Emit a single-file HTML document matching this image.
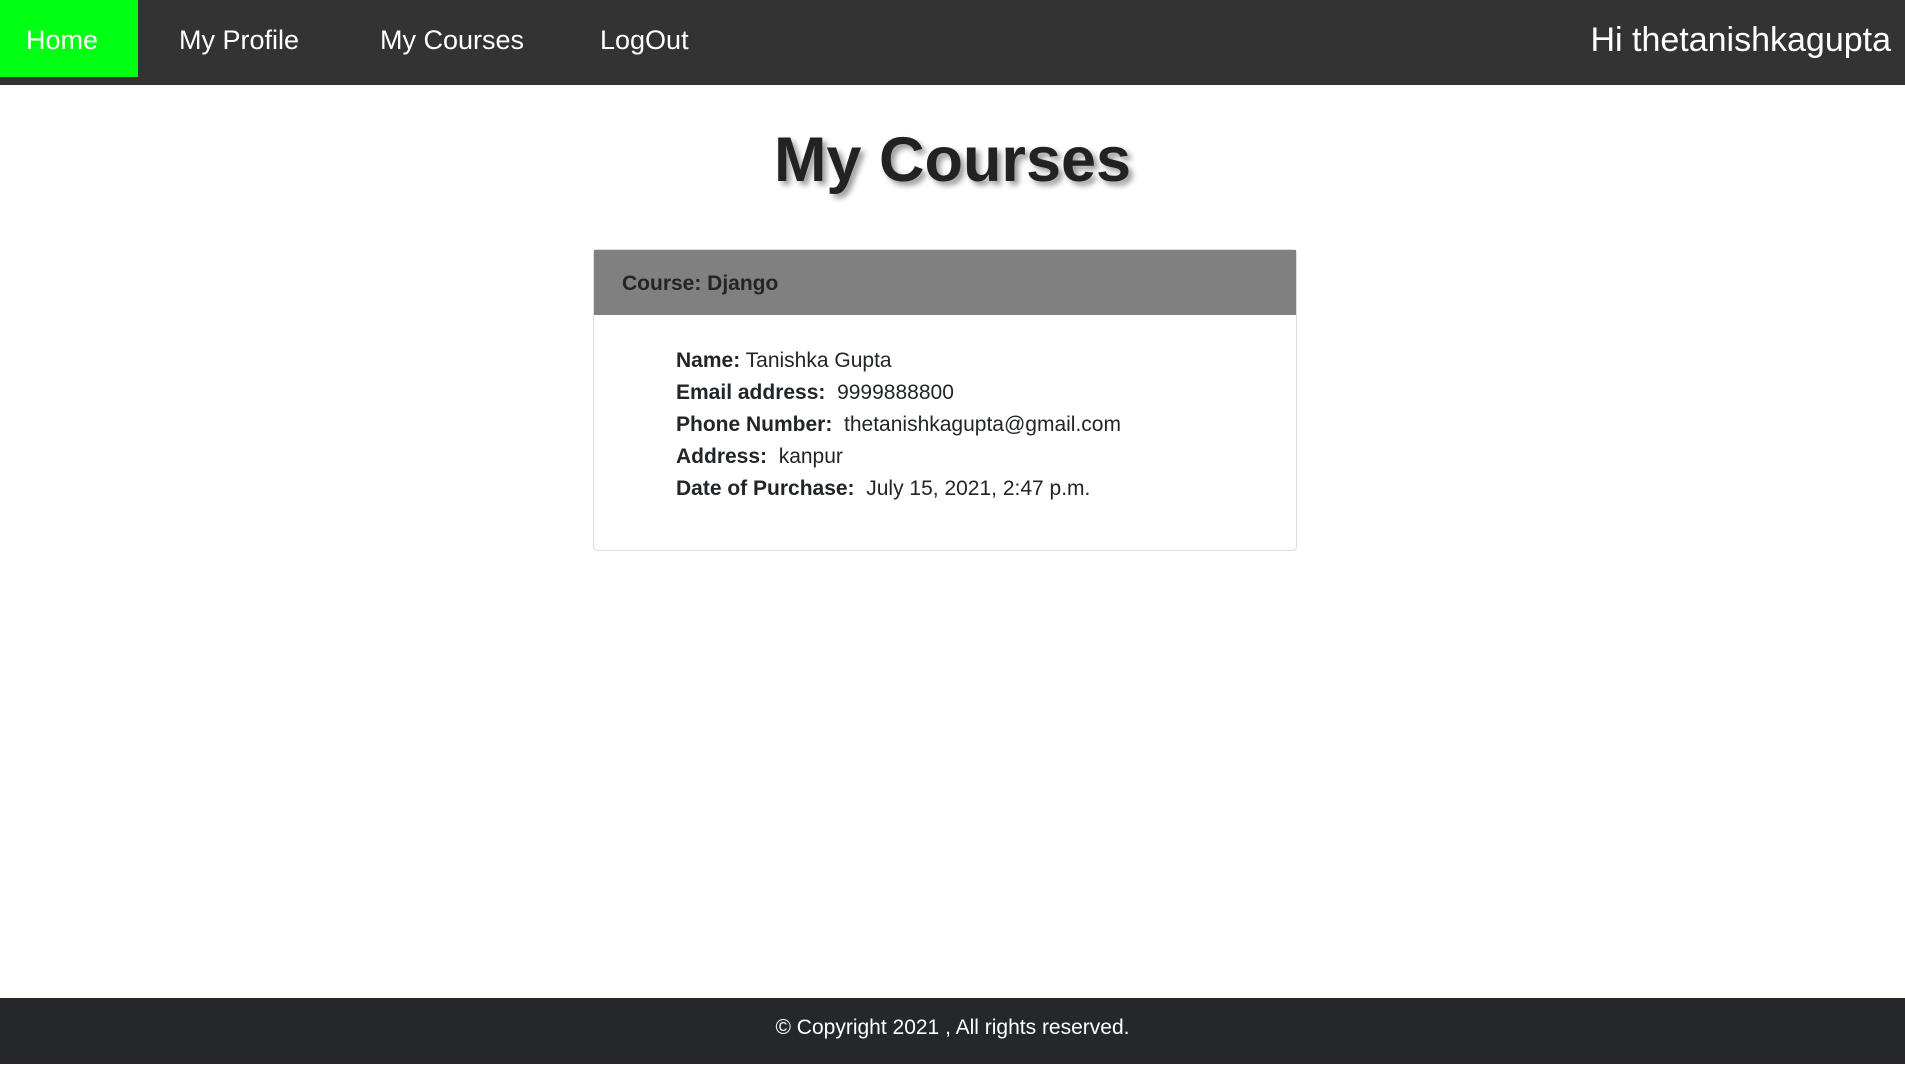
<!DOCTYPE html>
<html><head><style>
*{margin:0;padding:0;box-sizing:border-box}
body{width:1905px;height:1066px;font-family:"Segoe UI","Liberation Sans",sans-serif;background:#fff;position:relative;overflow:hidden;color:#212529}
.nav{position:absolute;left:0;top:0;width:1905px;height:85px;background:#333}
.nav a{position:absolute;top:0;height:77px;line-height:80px;color:#fff;font-size:27px;text-decoration:none}
.home{left:0;width:138px;background:#00ff13;padding-left:26px}
.hi{position:absolute;right:14px;top:0;line-height:80px;color:#fff;font-size:34px}
h1{position:absolute;top:124px;width:100%;text-align:center;font-size:63px;font-weight:bold;text-shadow:4px 4px 6px #999;color:#222}
.card{position:absolute;left:593px;top:249px;width:704px;height:302px;border:1px solid #ddd;border-radius:4px}
.ch{height:65px;background:#808080;padding-left:28px;line-height:67px;font-weight:bold;font-size:21px}
.cb{padding:30px 0 0 82px;font-size:21px;line-height:32px}
.foot{position:absolute;left:0;top:998px;width:1905px;height:66px;background:#25272a;color:#fff;text-align:center;line-height:60px;font-size:21px}
</style></head><body>
<div class="nav">
<a class="home">Home</a>
<a style="left:179px">My Profile</a>
<a style="left:380px">My Courses</a>
<a style="left:600px">LogOut</a>
<div class="hi">Hi thetanishkagupta</div>
</div>
<h1>My Courses</h1>
<div class="card">
<div class="ch">Course: Django</div>
<div class="cb">
<div><b>Name:</b> Tanishka Gupta</div>
<div><b>Email address:</b>&nbsp; 9999888800</div>
<div><b>Phone Number:</b>&nbsp; thetanishkagupta@gmail.com</div>
<div><b>Address:</b>&nbsp; kanpur</div>
<div><b>Date of Purchase:</b>&nbsp; July 15, 2021, 2:47 p.m.</div>
</div>
</div>
<div class="foot">© Copyright 2021 , All rights reserved.</div>
</body></html>
